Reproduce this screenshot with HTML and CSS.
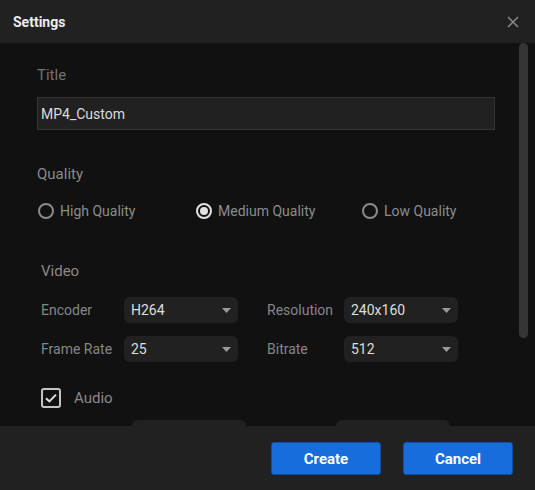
FILE: index.html
```html
<!DOCTYPE html>
<html lang="en">
<head>
<meta charset="utf-8">
<title>Settings</title>
<link rel="stylesheet" href="styles.css">
</head>
<body>
<div class="dialog">
  <header class="header">
    <span class="header-title">Settings</span>
    <button class="close" aria-label="Close">
      <svg width="12" height="12" viewBox="0 0 12 12"><path d="M1 1L11 11M11 1L1 11" stroke="#8a8a8a" stroke-width="1.5" fill="none"/></svg>
    </button>
  </header>
  <main class="body">
    <div class="section-label title-label">Title</div>
    <div class="text-input">MP4_Custom</div>

    <div class="section-label quality-label">Quality</div>
    <div class="radio-row">
      <label class="radio"><span class="radio-dot"></span>High Quality</label>
      <label class="radio checked"><span class="radio-dot"></span>Medium Quality</label>
      <label class="radio"><span class="radio-dot"></span>Low Quality</label>
    </div>

    <div class="section-label video-label">Video</div>
    <div class="vgrid">
      <span class="field-label">Encoder</span>
      <div class="select"><span>H264</span><svg class="caret" width="9" height="5" viewBox="0 0 9 5"><path d="M0 0H9L4.5 5Z" fill="#9a9a9a"/></svg></div>
      <span class="field-label right">Resolution</span>
      <div class="select"><span>240x160</span><svg class="caret" width="9" height="5" viewBox="0 0 9 5"><path d="M0 0H9L4.5 5Z" fill="#9a9a9a"/></svg></div>
      <span class="field-label">Frame Rate</span>
      <div class="select"><span>25</span><svg class="caret" width="9" height="5" viewBox="0 0 9 5"><path d="M0 0H9L4.5 5Z" fill="#9a9a9a"/></svg></div>
      <span class="field-label right">Bitrate</span>
      <div class="select"><span>512</span><svg class="caret" width="9" height="5" viewBox="0 0 9 5"><path d="M0 0H9L4.5 5Z" fill="#9a9a9a"/></svg></div>
    </div>

    <label class="check-row">
      <span class="checkbox"><svg width="14" height="12" viewBox="0 0 14 12"><path d="M2 6.2L5.4 9.4L12 2.6" stroke="#e0e0e0" stroke-width="2" fill="none"/></svg></span>
      <span class="check-text">Audio</span>
    </label>
    <div class="agrid">
      <span class="field-label"></span>
      <div class="select"></div>
      <span class="field-label right"></span>
      <div class="select"></div>
    </div>

    <div class="scrollbar"></div>
  </main>
  <footer class="footer">
    <button class="btn">Create</button>
    <button class="btn">Cancel</button>
  </footer>
</div>
</body>
</html>
```

FILE: styles.css
```css
* { box-sizing: border-box; }

html, body {
  margin: 0;
  padding: 0;
  background: #111111;
}

body {
  width: 535px;
  height: 490px;
  overflow: hidden;
  font-family: Roboto, "Noto Sans", "Liberation Sans", sans-serif;
  font-size: 14px;
  color: #8c8c8c;
}

.dialog {
  display: flex;
  flex-direction: column;
  width: 535px;
  height: 490px;
}

.header {
  height: 43px;
  flex: none;
  background: #212121;
  display: flex;
  align-items: center;
  justify-content: space-between;
  padding: 0 16px 0 13px;
}

.header-title {
  font-weight: 700;
  font-size: 14px;
  color: #ececec;
  line-height: 20px;
}

.close {
  background: none;
  border: 0;
  padding: 0;
  width: 12px;
  height: 12px;
  display: flex;
}

.body {
  flex: 1 1 auto;
  min-height: 0;
  position: relative;
  overflow: hidden;
  background: #111111;
  padding: 22px 0 0 37px;
  display: flex;
  flex-direction: column;
  align-items: flex-start;
}

.body > * { flex-shrink: 0; }

.section-label {
  font-size: 15px;
  line-height: 20px;
  color: #8a8a8a;
}

.title-label { color: #727272; }

.text-input {
  margin-top: 12px;
  width: 458px;
  height: 33px;
  background: #212121;
  border: 1px solid #363636;
  padding: 0 3px;
  display: flex;
  align-items: center;
  font-size: 14px;
  color: #dcdcdc;
}

.quality-label { margin-top: 34px; }

.radio-row {
  margin-top: 17px;
  display: grid;
  grid-template-columns: 158px 166px auto;
  margin-left: 1px;
}

.radio {
  display: flex;
  align-items: center;
  height: 20px;
  gap: 6px;
  font-size: 14px;
  color: #8c8c8c;
}

.radio-dot {
  width: 16px;
  height: 16px;
  border-radius: 50%;
  border: 2px solid #8a8a8a;
  display: flex;
  align-items: center;
  justify-content: center;
}

.radio.checked .radio-dot { border-color: #e2e2e2; }

.radio.checked .radio-dot::after {
  content: "";
  width: 8px;
  height: 8px;
  border-radius: 50%;
  background: #e2e2e2;
}

.video-label {
  margin-top: 40px;
  margin-left: 4px;
}

.vgrid, .agrid {
  display: grid;
  row-gap: 13px;
  margin-left: 4px;
}

.vgrid {
  margin-top: 16px;
  grid-template-columns: 83px 114px 106px 114px;
}

.agrid {
  margin-top: 12px;
  grid-template-columns: 91px 114px 90px 114px;
}

.field-label {
  height: 26px;
  line-height: 26px;
  font-size: 14px;
  color: #868686;
  white-space: nowrap;
}

.vgrid .field-label.right { padding-left: 29px; }
.agrid .field-label.right { padding-left: 20px; }

.select {
  height: 26px;
  border-radius: 6px;
  background: #212121;
  display: flex;
  align-items: center;
  justify-content: space-between;
  padding: 0 7px 0 7px;
  font-size: 14px;
  color: #dedede;
}

.caret { flex: none; }

.check-row {
  margin-top: 26px;
  margin-left: 4px;
  display: flex;
  align-items: center;
  height: 20px;
  gap: 13px;
}

.checkbox {
  width: 20px;
  height: 20px;
  border: 2px solid #c4c4c4;
  border-radius: 3px;
  display: flex;
  align-items: center;
  justify-content: center;
}

.check-text {
  font-size: 15px;
  line-height: 20px;
  color: #8a8a8a;
}

.scrollbar {
  position: absolute;
  top: 0;
  right: 7px;
  width: 9px;
  height: 295px;
  border-radius: 5px;
  background: #353535;
}

.footer {
  height: 64px;
  flex: none;
  background: #212121;
  display: flex;
  justify-content: flex-end;
  align-items: flex-start;
  gap: 22px;
  padding: 16px 22px 0 0;
}

.btn {
  width: 110px;
  height: 33px;
  background: #176ddb;
  border: 1px solid #0f4fa3;
  border-radius: 3px;
  color: #ffffff;
  font-family: Roboto, "Liberation Sans", sans-serif;
  font-weight: 700;
  font-size: 15px;
  padding: 0;
}
```
